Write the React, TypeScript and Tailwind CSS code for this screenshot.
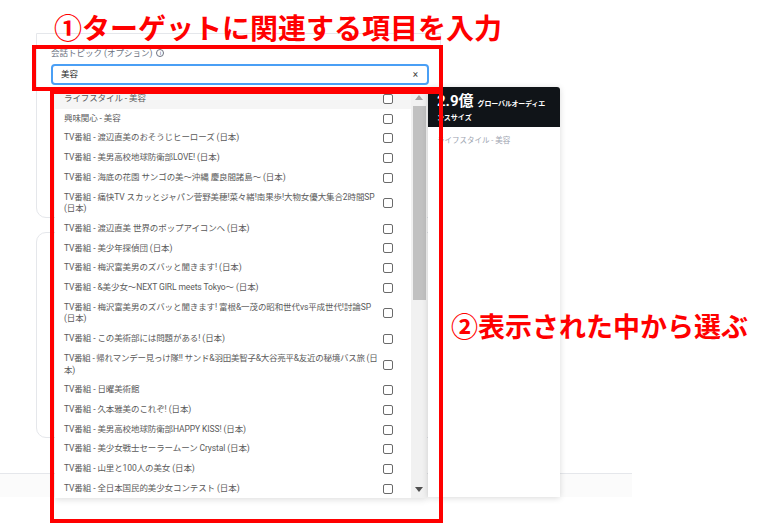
import React from "react";

const items: React.ReactNode[] = [
  "ライフスタイル - 美容",
  "興味関心 - 美容",
  "TV番組 - 渡辺直美のおそうじヒーローズ (日本)",
  "TV番組 - 美男高校地球防衛部LOVE! (日本)",
  "TV番組 - 海底の花園 サンゴの美～沖縄 慶良間諸島～ (日本)",
  <>TV番組 - 痛快TV スカッとジャパン菅野美穂!菜々緒!南果歩!大物女優大集合2時間SP<br />(日本)</>,
  "TV番組 - 渡辺直美 世界のポップアイコンへ (日本)",
  "TV番組 - 美少年探偵団 (日本)",
  "TV番組 - 梅沢富美男のズバッと聞きます! (日本)",
  "TV番組 - &美少女～NEXT GIRL meets Tokyo～ (日本)",
  <>TV番組 - 梅沢富美男のズバッと聞きます! 富根&一茂の昭和世代vs平成世代!討論SP<br />(日本)</>,
  "TV番組 - この美術部には問題がある! (日本)",
  <span className="tracking-[-0.25px]">TV番組 - 帰れマンデー見っけ隊!! サンド&羽田美智子&大谷亮平&友近の秘境バス旅 (日<br />本)</span>,
  "TV番組 - 日曜美術館",
  "TV番組 - 久本雅美のこれぞ! (日本)",
  "TV番組 - 美男高校地球防衛部HAPPY KISS! (日本)",
  "TV番組 - 美少女戦士セーラームーン Crystal (日本)",
  "TV番組 - 山里と100人の美女 (日本)",
  "TV番組 - 全日本国民的美少女コンテスト (日本)",
];

export default function App() {
  return (
    <div className="relative w-[768px] h-[525px] overflow-hidden bg-white font-['Roboto','Noto_Sans_CJK_JP',sans-serif]">
      {/* page background */}
      <div className="flex flex-col">
        <div className="h-[33px]" />
        <div className="ml-[36px] w-[405px] h-[185px] border-t border-l border-r border-b border-[#e5e7eb] rounded-b-[10px] px-[14px] pt-[13px]">
          <div className="flex items-center gap-[4px] text-[8.5px] leading-[12px] text-[#6b7280]">
            <span>会話トピック (オプション)</span>
            <span className="flex items-center justify-center w-[8px] h-[8px] rounded-full border border-[#6b7280] text-[6px] leading-none">i</span>
          </div>
          <div className="mt-[5px] w-[378px] h-[21px] border-2 border-[#4a9ff5] rounded-[4px] flex items-center justify-between pl-[8px] pr-[9px] text-[8.5px] text-[#222]">
            <span>美容</span>
            <span className="text-[10px] text-[#444]">×</span>
          </div>
        </div>
        <div className="ml-[36px] mt-[14px] w-[405px] h-[206px] border border-[#e5e7eb] rounded-[10px]" />
        <div className="h-[35px]" />
        <div className="w-[632px] border-t border-[#e5e7eb] h-[24px] bg-[#fbfbfb]" />
      </div>

      {/* dropdown list */}
      <div className="absolute left-[55px] top-[89px] w-[372px] h-[409px] bg-white shadow-[0_2px_6px_rgba(0,0,0,0.12)] flex">
        <div className="flex-1 min-w-0 overflow-hidden flex flex-col">
          {items.map((t, i) => (
            <div
              key={i}
              className={`flex items-center pl-[9px] pr-[18px] py-[4px] ${i === 0 ? "bg-[#f5f5f5]" : ""}`}
            >
              <span className="flex-1 min-w-0 text-[8.5px] leading-[11.7px] tracking-[-0.1px] text-[#5a5a5a] whitespace-nowrap">{t}</span>
              <span className="shrink-0 ml-[3px] w-[10px] h-[10px] border border-[#6b6b6b] rounded-[2px] bg-white" />
            </div>
          ))}
        </div>
        <div className="shrink-0 w-[16px] bg-[#f1f1f1] flex flex-col items-center">
          <div className="h-[17px] flex items-center justify-center">
            <svg width="8" height="5" viewBox="0 0 8 5"><path d="M0 5 L4 0 L8 5 Z" fill="#a3a3a3" /></svg>
          </div>
          <div className="w-[13px] h-[194px] bg-[#c1c1c1]" />
          <div className="flex-1" />
          <div className="h-[17px] flex items-center justify-center">
            <svg width="8" height="5" viewBox="0 0 8 5"><path d="M0 0 L4 5 L8 0 Z" fill="#505050" /></svg>
          </div>
        </div>
      </div>

      {/* audience card */}
      <div className="absolute left-[428px] top-[87px] w-[132px] h-[410px] bg-white rounded-t-[3px] shadow-[0_1px_6px_rgba(0,0,0,0.15)] overflow-hidden">
        <div className="bg-[#101418] h-[40px] px-[9px] pt-[6px] text-white">
          <div className="flex items-baseline gap-[4px] whitespace-nowrap leading-[17px]">
            <span className="text-[15px] font-bold">2.9億</span>
            <span className="text-[7px] font-bold tracking-[-0.2px]">グローバルオーディエ</span>
          </div>
          <div className="text-[7px] font-bold leading-[11px] whitespace-nowrap">ンスサイズ</div>
        </div>
        <div className="px-[9px] pt-[9px] text-[7.5px] leading-[10px] text-[#9ca3af]">ライフスタイル - 美容</div>
      </div>

      {/* annotations */}
      <div className="absolute left-[54px] top-[12px] text-[28px] leading-[30px] font-bold text-[#ff0000] whitespace-nowrap font-['Noto_Sans_CJK_JP',sans-serif]">
        ①ターゲットに関連する項目を入力
      </div>
      <div className="absolute left-[32px] top-[45px] w-[411px] h-[46px] border-[4px] border-[#ff0000]" />
      <div className="absolute left-[50px] top-[90px] w-[393px] h-[433px] border-[4px] border-[#ff0000]" />
      <div className="absolute left-[451px] top-[311px] text-[27px] leading-[29px] font-bold text-[#ff0000] whitespace-nowrap font-['Noto_Sans_CJK_JP',sans-serif]">
        ②表示された中から選ぶ
      </div>
    </div>
  );
}
